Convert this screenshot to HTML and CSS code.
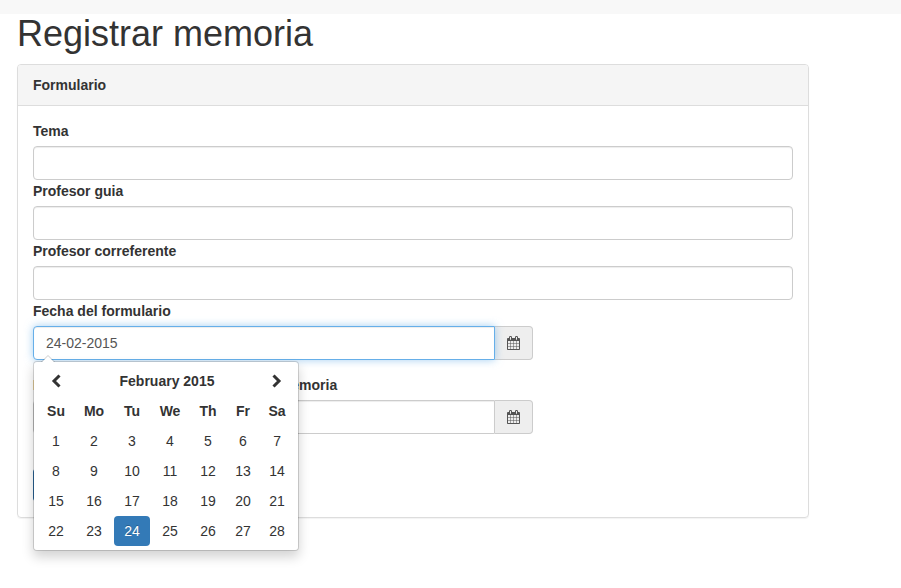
FILE: index.html
```html
<!DOCTYPE html>
<html lang="es">
<head>
<meta charset="utf-8">
<meta name="viewport" content="width=device-width, initial-scale=1">
<title>Registrar memoria</title>
<link rel="stylesheet" href="styles.css">
</head>
<body>
<svg class="sprite" aria-hidden="true">
  <symbol id="calendar" viewBox="64 0 1664 1792">
    <path d="M192 1664h288v-288h-288v288zm352 0h320v-288h-320v288zm-352-352h288v-320h-288v320zm352 0h320v-320h-320v320zm-352-384h288v-288h-288v288zm736 736h320v-288h-320v288zm-384-736h320v-288h-320v288zm768 736h288v-288h-288v288zm-384-352h320v-320h-320v320zm-352-864v-288q0-13-9.5-22.5t-22.5-9.5h-64q-13 0-22.5 9.5t-9.5 22.5v288q0 13 9.5 22.5t22.5 9.5h64q13 0 22.5-9.5t9.5-22.5zm736 864h288v-320h-288v320zm-384-384h320v-288h-320v288zm384 0h288v-288h-288v288zm32-480v-288q0-13-9.5-22.5t-22.5-9.5h-64q-13 0-22.5 9.5t-9.5 22.5v288q0 13 9.5 22.5t22.5 9.5h64q13 0 22.5-9.5t9.5-22.5zm384-64v1280q0 52-38 90t-90 38h-1408q-52 0-90-38t-38-90v-1280q0-52 38-90t90-38h128v-96q0-66 47-113t113-47h64q66 0 113 47t47 113v96h384v-96q0-66 47-113t113-47h64q66 0 113 47t47 113v96h128q52 0 90 38t38 90z"/>
  </symbol>
</svg>
<div class="topbar"></div>
<main class="content">
  <h1>Registrar memoria</h1>
  <section class="panel">
    <h2 class="panel-heading">Formulario</h2>
    <form class="panel-body">
      <div class="field">
        <label for="tema">Tema</label>
        <input class="control" id="tema" type="text">
      </div>
      <div class="field">
        <label for="guia">Profesor guia</label>
        <input class="control" id="guia" type="text">
      </div>
      <div class="field">
        <label for="correferente">Profesor correferente</label>
        <input class="control" id="correferente" type="text">
      </div>
      <div class="field date-field">
        <label for="fecha">Fecha del formulario</label>
        <div class="date-group">
          <input class="control active" id="fecha" type="text" value="24-02-2015">
          <button class="addon" type="button" aria-label="Calendario"><svg><use href="#calendar"/></svg></button>
          <div class="picker">
            <table>
              <colgroup><col class="w36"><col class="w40"><col class="w36"><col class="w40"><col class="w36"><col class="w34"><col class="w34"></colgroup>
              <thead>
                <tr>
                  <th><button type="button" aria-label="Anterior"><svg class="chevron" viewBox="0 0 10 14"><path d="M8.500 1.500 3 7l5.500 5.500"/></svg></button></th>
                  <th colspan="5">February 2015</th>
                  <th><button type="button" aria-label="Siguiente"><svg class="chevron" viewBox="0 0 10 14"><path d="M1.500 1.500 7 7l-5.500 5.500"/></svg></button></th>
                </tr>
                <tr><th>Su</th><th>Mo</th><th>Tu</th><th>We</th><th>Th</th><th>Fr</th><th>Sa</th></tr>
              </thead>
              <tbody>
                <tr><td><button type="button">1</button></td><td><button type="button">2</button></td><td><button type="button">3</button></td><td><button type="button">4</button></td><td><button type="button">5</button></td><td><button type="button">6</button></td><td><button type="button">7</button></td></tr>
                <tr><td><button type="button">8</button></td><td><button type="button">9</button></td><td><button type="button">10</button></td><td><button type="button">11</button></td><td><button type="button">12</button></td><td><button type="button">13</button></td><td><button type="button">14</button></td></tr>
                <tr><td><button type="button">15</button></td><td><button type="button">16</button></td><td><button type="button">17</button></td><td><button type="button">18</button></td><td><button type="button">19</button></td><td><button type="button">20</button></td><td><button type="button">21</button></td></tr>
                <tr><td><button type="button">22</button></td><td><button type="button">23</button></td><td><button type="button" class="selected">24</button></td><td><button type="button">25</button></td><td><button type="button">26</button></td><td><button type="button">27</button></td><td><button type="button">28</button></td></tr>
              </tbody>
            </table>
          </div>
        </div>
      </div>
      <div class="field">
        <label for="entrega">Fecha limite para la evaluacion de la memoria</label>
        <div class="date-group">
          <input class="control" id="entrega" type="text">
          <button class="addon" type="button" aria-label="Calendario"><svg><use href="#calendar"/></svg></button>
        </div>
      </div>
      <button class="submit" type="submit">Registrar</button>
    </form>
  </section>
</main>
</body>
</html>
```
FILE: styles.css
```css
* {
  box-sizing: border-box;
}

body {
  min-height: 100vh;
  margin: 0;
  background: #fff;
  color: #333;
  font: 14px/20px "Liberation Sans", Arial, sans-serif;
}

button,
input {
  font: inherit;
  color: inherit;
}

.sprite {
  display: none;
}

.topbar {
  height: 14px;
  background: #f8f8f8;
}

.content {
  padding: 0 92px 20px 17px;
}

h1 {
  margin: 0 0 10px;
  font-size: 36px;
  font-weight: 400;
  line-height: 40px;
}

.panel {
  border: 1px solid #ddd;
  border-radius: 4px;
  box-shadow: 0 1px 1px rgba(0, 0, 0, .05);
}

.panel-heading {
  margin: 0;
  padding: 10px 15px;
  border-bottom: 1px solid #ddd;
  border-radius: 3px 3px 0 0;
  background: #f5f5f5;
  font-size: 14px;
  font-weight: 700;
}

.panel-body {
  padding: 15px;
}

label {
  display: block;
  margin-bottom: 5px;
  font-weight: 700;
}

.field {
  margin-bottom: 1px;
}

.date-field {
  margin-bottom: 15px;
}

.control {
  display: block;
  width: 100%;
  height: 34px;
  padding: 6px 12px;
  border: 1px solid #ccc;
  border-radius: 4px;
  background: #fff;
  box-shadow: inset 0 1px 1px rgba(0, 0, 0, .075);
  color: #555;
  outline: 0;
}

.control.active,
.control:focus {
  position: relative;
  z-index: 2;
  border-color: #66afe9;
  box-shadow: inset 0 1px 1px rgba(0, 0, 0, .075), 0 0 8px rgba(102, 175, 233, .6);
}

.date-group {
  position: relative;
  display: flex;
  max-width: 500px;
}

.date-group .control {
  flex: 1;
  min-width: 0;
  border-radius: 4px 0 0 4px;
}

.addon {
  display: flex;
  align-items: center;
  justify-content: center;
  width: 38px;
  padding: 0;
  border: 1px solid #ccc;
  border-left: 0;
  border-radius: 0 4px 4px 0;
  background: #eee;
}

.addon svg {
  width: 13px;
  height: 14px;
  fill: #555;
}

.picker {
  position: absolute;
  z-index: 10;
  top: 100%;
  left: 0;
  margin-top: 1px;
  padding: 4px;
  border: 1px solid rgba(0, 0, 0, .15);
  border-radius: 4px;
  background: #fff;
  background-clip: padding-box;
  box-shadow: 0 6px 12px rgba(0, 0, 0, .175);
}

.picker::before,
.picker::after {
  content: "";
  position: absolute;
  border-style: solid;
  border-color: transparent;
  border-top: 0;
}

.picker::before {
  top: -7px;
  left: 7px;
  border-width: 0 7px 7px;
  border-bottom-color: rgba(0, 0, 0, .2);
}

.picker::after {
  top: -6px;
  left: 8px;
  border-width: 0 6px 6px;
  border-bottom-color: #fff;
}

.picker table {
  width: 256px;
  table-layout: fixed;
  border-collapse: collapse;
  text-align: center;
}

.w34 { width: 34px; }
.w36 { width: 36px; }
.w40 { width: 40px; }

.picker th,
.picker td {
  height: 30px;
  padding: 0;
}

.picker button {
  display: flex;
  align-items: center;
  justify-content: center;
  width: 100%;
  height: 30px;
  padding: 0;
  border: 0;
  border-radius: 4px;
  background: none;
}

.picker .selected {
  background: #337ab7;
  color: #fff;
  text-shadow: 0 -1px 0 rgba(0, 0, 0, .25);
}

.chevron {
  width: 10px;
  height: 14px;
  fill: none;
  stroke: #333;
  stroke-width: 3;
}

.submit {
  height: 34px;
  margin-top: 33px;
  padding: 6px 12px;
  border: 1px solid #2e6da4;
  border-radius: 4px;
  background: #337ab7;
  color: #fff;
}
```
